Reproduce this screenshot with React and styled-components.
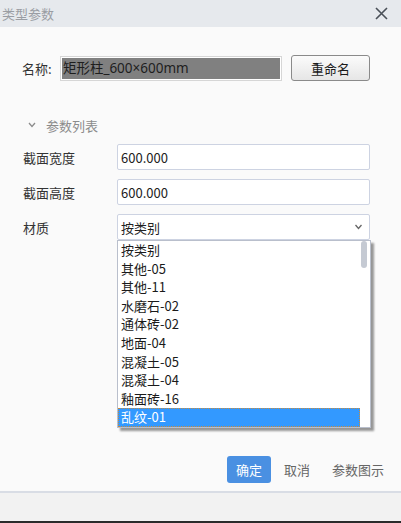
import React from "react";
import styled, { createGlobalStyle } from "styled-components";

const GlobalStyle = createGlobalStyle`
  html, body {
    margin: 0;
    padding: 0;
  }
  body {
    font-family: "Noto Sans CJK SC", "Noto Sans", sans-serif;
    font-size: 13px;
    color: #333;
  }
`;

const Window = styled.div`
  width: 401px;
  height: 523px;
  display: flex;
  flex-direction: column;
  background-color: #fafafa;
  overflow: hidden;
`;

const TitleBar = styled.div`
  height: 27px;
  flex-shrink: 0;
  display: flex;
  align-items: center;
  justify-content: space-between;
  padding: 0 13px 0 2px;
  background-color: #e6e9ed;
`;

const Title = styled.span`
  color: #9a9da3;
  font-size: 13px;
  line-height: 27px;
`;

const CloseIcon = styled.svg`
  width: 13px;
  height: 13px;
`;

const Content = styled.div`
  flex: 1;
  padding: 28px 31px 0 22px;
`;

const NameRow = styled.div`
  display: flex;
  align-items: center;
  height: 26px;
`;

const NameLabel = styled.span`
  width: 38px;
  font-size: 13px;
  color: #333;
`;

const NameBox = styled.div`
  width: 223px;
  height: 25px;
  box-sizing: border-box;
  border: 1px solid #d6d6d6;
  padding: 1px;
  background: #fff;
`;

const NameFill = styled.div`
  height: 100%;
  background-color: #808080;
  color: #1e1e1e;
  font-family: "Noto Sans", "Noto Sans CJK SC", sans-serif;
  font-size: 13.5px;
  line-height: 21px;
  padding-left: 1px;
  white-space: nowrap;
`;

const RenameButton = styled.button`
  margin-left: 9px;
  width: 79px;
  height: 26px;
  border: 1px solid #8a8a8a;
  border-radius: 3px;
  background: linear-gradient(#fbfbfb, #e6e6e6);
  font-family: inherit;
  font-size: 13px;
  color: #1a1a1a;
  padding: 0;
`;

const SectionHeader = styled.div`
  display: flex;
  align-items: center;
  height: 20px;
  margin-top: 34px;
  padding-left: 6px;
  gap: 10px;
  color: #8c8c8c;
  font-size: 13px;
`;

const Chevron = styled.svg`
  width: 8px;
  height: 6px;
`;

const Form = styled.div`
  display: flex;
  flex-direction: column;
  gap: 9px;
  margin-top: 9px;
`;

const Row = styled.div`
  display: flex;
  align-items: center;
  height: 26px;
`;

const RowLabel = styled.span`
  width: 94px;
  padding-left: 1px;
  color: #333;
  font-size: 13px;
`;

const Field = styled.div`
  position: relative;
  flex: 1;
  height: 26px;
  box-sizing: border-box;
  border: 1px solid #cdd3e2;
  border-radius: 2px;
  background: #fff;
  display: flex;
  align-items: center;
  justify-content: space-between;
  padding: 0 6px 0 3px;
  font-size: 13px;
  color: #222;
`;

const DropList = styled.div`
  position: absolute;
  left: -1px;
  top: 25px;
  width: 254px;
  height: 188px;
  box-sizing: border-box;
  border: 1px solid #b9bfcc;
  background: #fff;
  display: flex;
  box-shadow: 3px 3px 2px rgba(0, 0, 0, 0.4);
  z-index: 5;
`;

const Items = styled.div`
  flex: 1;
  display: flex;
  flex-direction: column;
`;

const Item = styled.div`
  height: 18.6px;
  line-height: 18.6px;
  padding-left: 3px;
  font-size: 13px;
  color: ${(p) => (p.$selected ? "#fff" : "#1a1a1a")};
  background: ${(p) => (p.$selected ? "#3399ff" : "transparent")};
  outline: ${(p) => (p.$selected ? "1px dotted #c98a3a" : "none")};
  outline-offset: -1px;
  white-space: nowrap;
`;

const ScrollTrack = styled.div`
  width: 8px;
  padding: 0 1px;
`;

const ScrollThumb = styled.div`
  width: 6px;
  height: 27px;
  border-radius: 3px;
  background: #c5cad3;
`;

const ButtonBar = styled.div`
  display: flex;
  justify-content: flex-end;
  gap: 4px;
  padding: 0 8px 8px 0;
`;

const ActionButton = styled.button`
  height: 27px;
  padding: 0 9px;
  border: none;
  border-radius: 3px;
  font-family: inherit;
  font-size: 13px;
  background: ${(p) => (p.$primary ? "#4a90e2" : "transparent")};
  color: ${(p) => (p.$primary ? "#fff" : "#666")};
`;

const Footer = styled.div`
  height: 28px;
  flex-shrink: 0;
  background: #f2f2f2;
  border-top: 2px solid #d9dde5;
  border-bottom: 2px solid #2b2b2b;
`;

const materials = [
  "按类别",
  "其他-05",
  "其他-11",
  "水磨石-02",
  "通体砖-02",
  "地面-04",
  "混凝土-05",
  "混凝土-04",
  "釉面砖-16",
  "乱纹-01",
];

export default function App() {
  return (
    <>
      <GlobalStyle />
      <Window>
        <TitleBar>
          <Title>类型参数</Title>
          <CloseIcon viewBox="0 0 13 13">
            <path d="M1 1 L12 12 M12 1 L1 12" stroke="#4a5058" strokeWidth="1.6" />
          </CloseIcon>
        </TitleBar>
        <Content>
          <NameRow>
            <NameLabel>名称:</NameLabel>
            <NameBox>
              <NameFill>矩形柱_600×600mm</NameFill>
            </NameBox>
            <RenameButton>重命名</RenameButton>
          </NameRow>
          <SectionHeader>
            <Chevron viewBox="0 0 8 6">
              <path d="M1 1 L4 4.5 L7 1" stroke="#8c8c8c" strokeWidth="1.3" fill="none" />
            </Chevron>
            参数列表
          </SectionHeader>
          <Form>
            <Row>
              <RowLabel>截面宽度</RowLabel>
              <Field>600.000</Field>
            </Row>
            <Row>
              <RowLabel>截面高度</RowLabel>
              <Field>600.000</Field>
            </Row>
            <Row>
              <RowLabel>材质</RowLabel>
              <Field>
                按类别
                <Chevron viewBox="0 0 8 6" style={{ width: 9 }}>
                  <path d="M1 1 L4 4.5 L7 1" stroke="#666" strokeWidth="1.3" fill="none" />
                </Chevron>
                <DropList>
                  <Items>
                    {materials.map((m, i) => (
                      <Item key={m} $selected={i === materials.length - 1}>
                        {m}
                      </Item>
                    ))}
                  </Items>
                  <ScrollTrack>
                    <ScrollThumb />
                  </ScrollTrack>
                </DropList>
              </Field>
            </Row>
          </Form>
        </Content>
        <ButtonBar>
          <ActionButton $primary>确定</ActionButton>
          <ActionButton>取消</ActionButton>
          <ActionButton>参数图示</ActionButton>
        </ButtonBar>
        <Footer />
      </Window>
    </>
  );
}
